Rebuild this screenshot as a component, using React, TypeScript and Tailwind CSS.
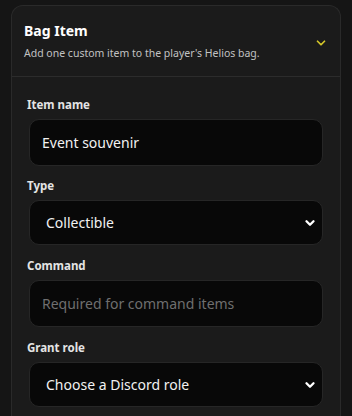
import { ChevronDown } from "lucide-react";

const font = { fontFamily: '"Noto Sans", "Open Sans", sans-serif' };

function Label({ children }: { children: string }) {
  return <div className="text-[11.5px] leading-[17px] font-bold text-[#e4e4e4] pl-[15px]">{children}</div>;
}

function Field({ value, placeholder }: { value?: string; placeholder?: string }) {
  return (
    <div className="mt-[6px] mx-[17px] h-[47px] rounded-[10px] border border-[#262626] bg-[#080808] flex items-center px-[12px]">
      {value ? (
        <span className="text-[14px] text-[#f2f2f2]">{value}</span>
      ) : (
        <span className="text-[14px] text-[#6f6f6f]">{placeholder}</span>
      )}
    </div>
  );
}

function Select({ value }: { value: string }) {
  return (
    <div className="mt-[6px] mx-[17px] h-[45px] rounded-[10px] border border-[#262626] bg-[#080808] flex items-center justify-between pl-[16px] pr-[5px]">
      <span className="text-[14px] text-[#f2f2f2]">{value}</span>
      <ChevronDown className="w-[14px] h-[14px] text-white" strokeWidth={4} />
    </div>
  );
}

export default function App() {
  return (
    <div className="w-[352px] h-[416px] bg-[#151515] pt-[5px] px-[11px] overflow-hidden" style={font}>
      <div className="rounded-t-[12px] border border-[#2a2a2a] border-b-0 bg-[#1b1b1b] h-[420px]">
        <div className="flex items-center justify-between pl-[12px] pr-[12px] h-[71px] border-b border-[#2c2c2c]">
          <div>
            <div className="text-[14px] leading-[18px] font-bold text-white">Bag Item</div>
            <div className="mt-[5px] text-[10.5px] leading-[16px] text-[#c2c2c2]">
              Add one custom item to the player's Helios bag.
            </div>
          </div>
          <ChevronDown className="w-[14px] h-[14px] text-[#d4c62a] mt-[4px]" strokeWidth={3} />
        </div>
        <div className="pt-[19px]">
          <Label>Item name</Label>
          <Field value="Event souvenir" />
          <div className="mt-[11px]">
            <Label>Type</Label>
          </div>
          <Select value="Collectible" />
          <div className="mt-[12px]">
            <Label>Command</Label>
          </div>
          <Field placeholder="Required for command items" />
          <div className="mt-[12px]">
            <Label>Grant role</Label>
          </div>
          <Select value="Choose a Discord role" />
        </div>
      </div>
    </div>
  );
}
